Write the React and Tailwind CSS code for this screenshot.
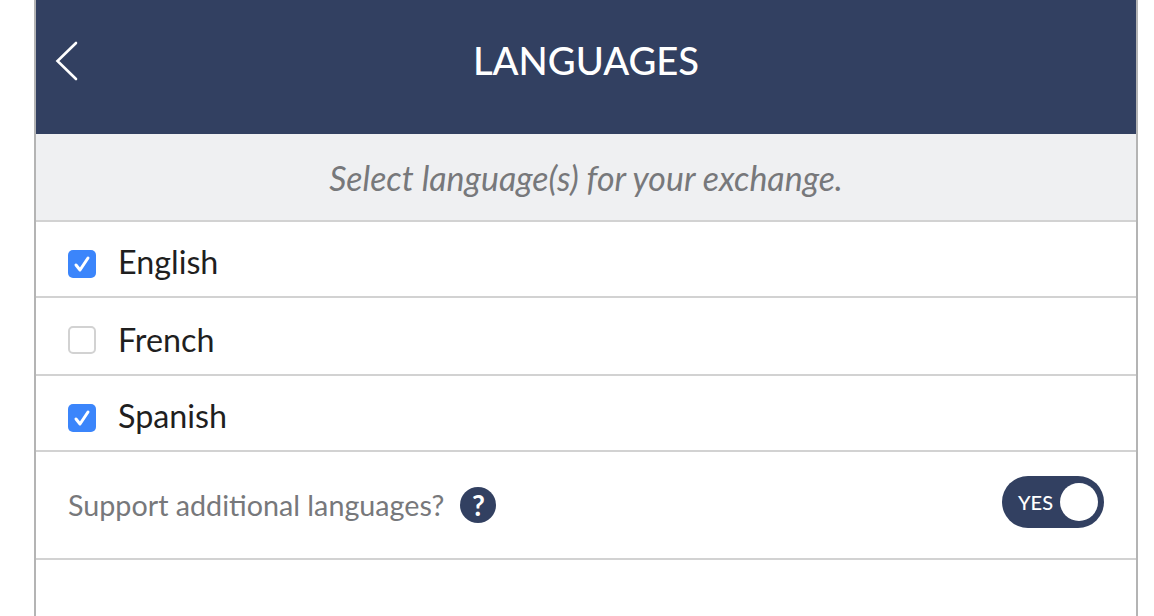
export default function App() {
  const Check = ({ on, cls = "" }) => (
    <span className={(on ? "flex h-[28px] w-[28px] items-center justify-center rounded-[5px] bg-[#3b85fb] " : "flex h-[28px] w-[28px] items-center justify-center rounded-[5px] border-2 border-[#d2d2d2] bg-white ") + cls}>
      {on && (
        <svg width="18" height="18" viewBox="0 0 18 18" fill="none">
          <path d="M3 10L7 15L15 3" stroke="#fff" strokeWidth="3" strokeLinecap="round" strokeLinejoin="round" />
        </svg>
      )}
    </span>
  );
  const Row = ({ on, label, cls, checkCls }) => (
    <div className={"flex items-center gap-[22px] border-b-2 border-[#d2d2d2] pl-[32px] " + cls}>
      <Check on={on} cls={checkCls} />
      <span className="text-[32.3px] leading-none text-[#1f1f1f]">{label}</span>
    </div>
  );
  return (
    <div className="h-[616px] w-[1154px] overflow-hidden bg-white font-['Lato','Noto_Sans',sans-serif]">
      <div className="ml-[34px] h-[616px] w-[1104px] border-x-2 border-[#b4b4b4]">
        <header className="relative flex h-[134px] items-center justify-center bg-[#324061]">
          <svg className="absolute left-[18px] top-[40px]" width="26" height="44" viewBox="0 0 26 44" fill="none">
            <path d="M22 3L3.5 21L22 39" stroke="#fff" strokeWidth="2.6" strokeLinecap="round" strokeLinejoin="miter" />
          </svg>
          <h1 className="mt-[-14px] text-[38.2px] font-medium leading-none text-white">LANGUAGES</h1>
        </header>
        <div className="flex h-[88px] items-center justify-center border-b-2 border-[#d2d2d2] bg-[#eff0f2] pt-[3px]">
          <p className="text-[33.9px] italic leading-none text-[#77787b]">Select language(s) for your exchange.</p>
        </div>
        <Row on label="English" cls="h-[76px] pt-[6px]" checkCls="mt-[4px]" />
        <Row label="French" cls="h-[78px] pt-[8px]" checkCls="" />
        <Row on label="Spanish" cls="h-[76px] pt-[6px]" checkCls="mt-[4px]" />
        <div className="flex h-[108px] items-center justify-between border-b-2 border-[#d2d2d2] pl-[32px] pr-[32px]">
          <div className="flex items-center gap-[16px]">
            <span className="text-[28.7px] leading-none text-[#77787b]">Support additional languages?</span>
            <span className="flex h-[36px] w-[36px] items-center justify-center rounded-full bg-[#324061] text-[28px] font-bold leading-none text-white">?</span>
          </div>
          <div className="mt-[-6px] flex h-[52px] w-[102px] items-center justify-between rounded-full bg-[#324061] pl-[16px] pr-[6px]">
            <span className="text-[20px] font-medium leading-none text-white">YES</span>
            <span className="h-[38px] w-[38px] rounded-full bg-white" />
          </div>
        </div>
      </div>
    </div>
  );
}
